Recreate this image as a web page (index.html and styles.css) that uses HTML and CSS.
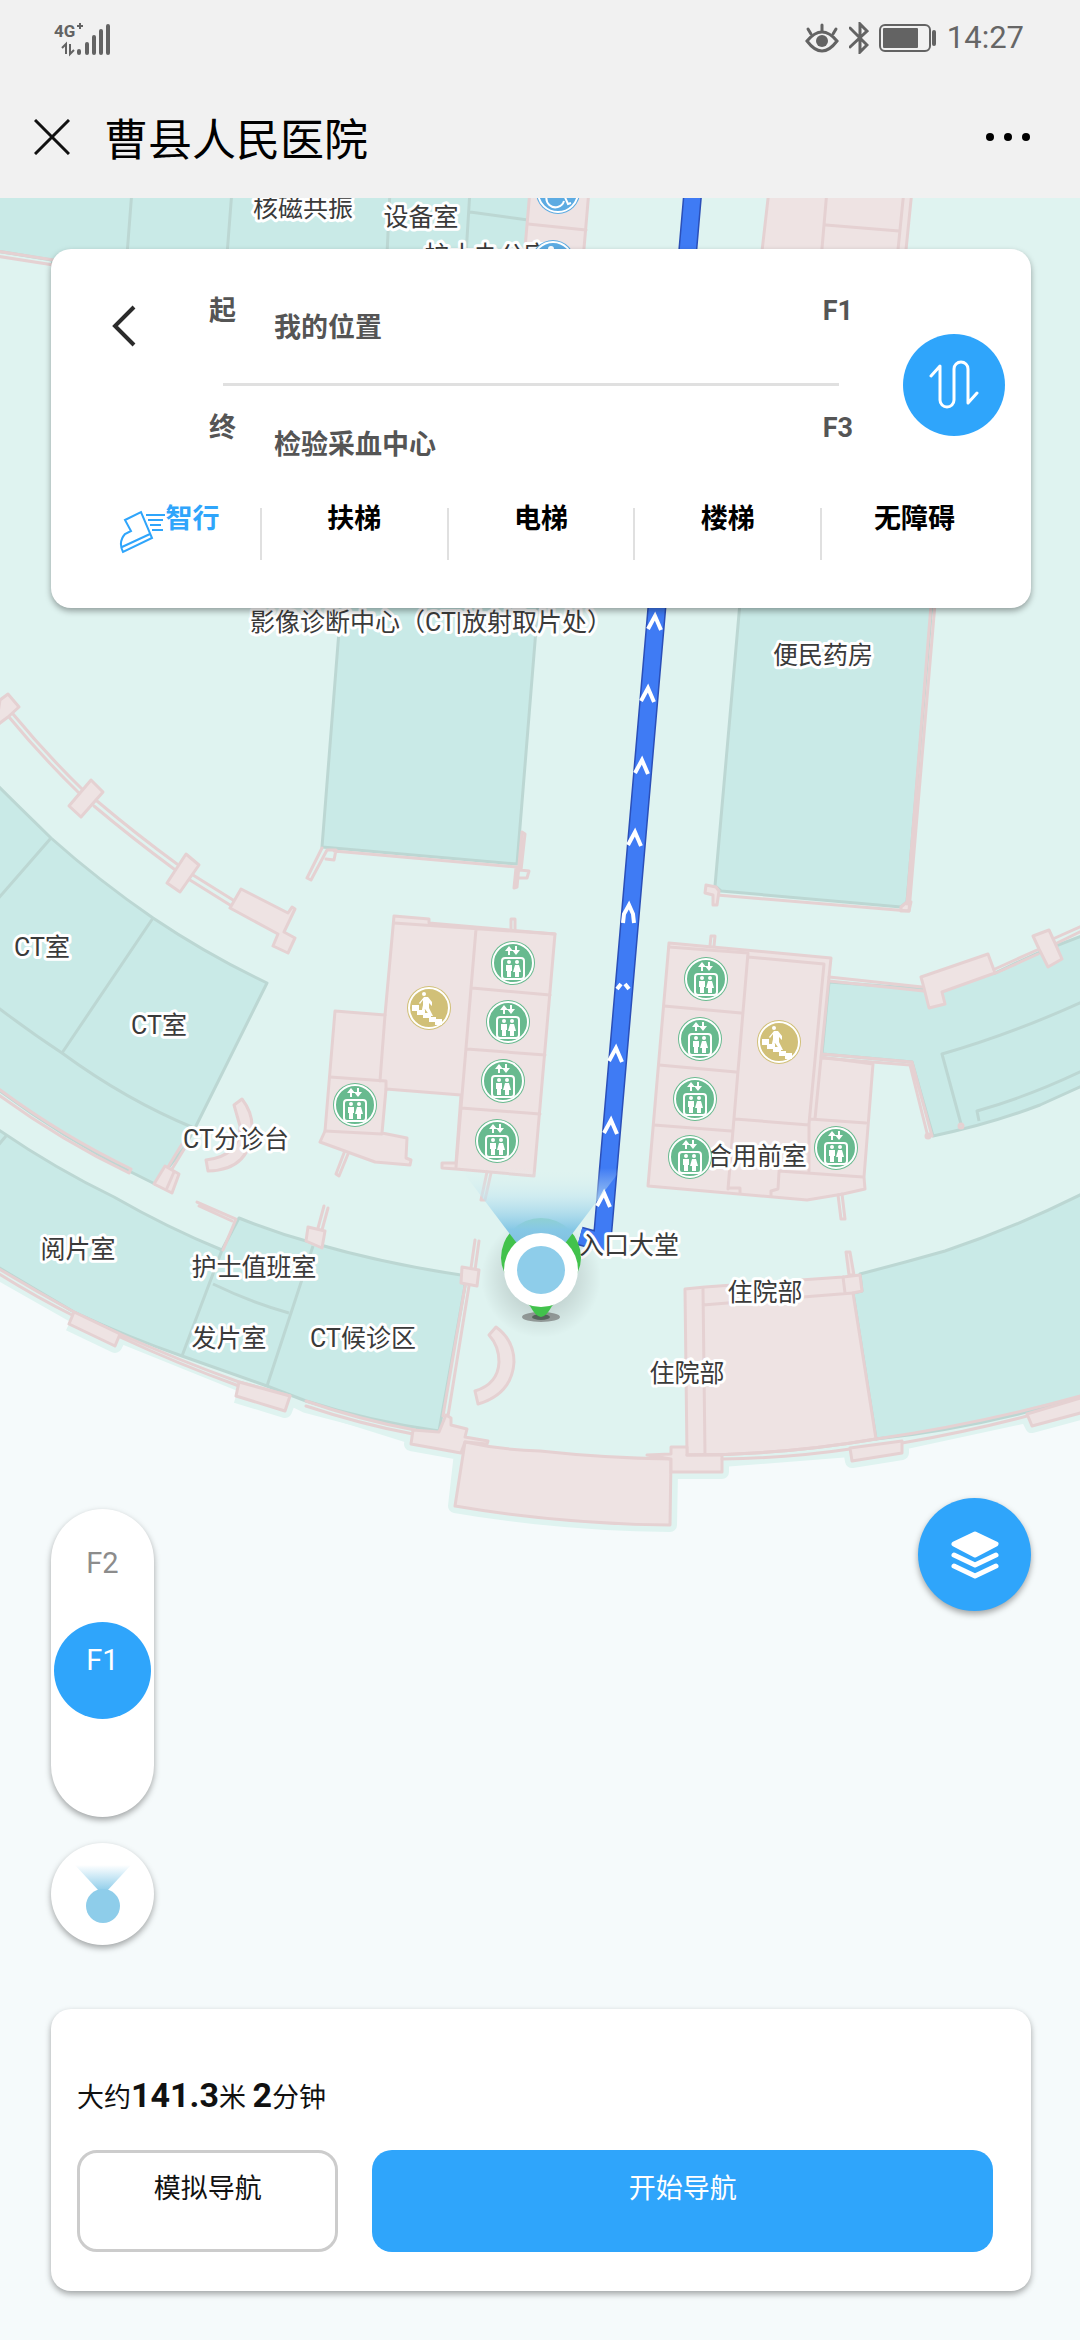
FILE: index.html
```html
<!DOCTYPE html>
<html lang="zh-CN">
<head>
  <meta charset="UTF-8" />
  <meta name="viewport" content="width=device-width, initial-scale=1.0"/>
  <title>曹县人民医院</title>
  <link rel="stylesheet" href="styles.css">
</head>
<body>
  <!-- STATUS BAR -->
  <div class="status">
    <svg class="signal" width="60" height="44" viewBox="54 14 60 44">
      <text x="54" y="35" class="net">4G</text>
      <path d="M77 24h6M80 21v6" class="thin"/>
      <path d="M62 46l4-4v10M70 42v10l4-4" class="thin"/>
      <path d="M79 49v2M87 42v9M94 35v16M101 29v22M108 24v27" class="bars"/>
    </svg>
    <div class="status-right">
      <svg width="34" height="30" viewBox="0 0 34 30">
        <path d="M2 18Q17 0 32 18Q17 38 2 18Z" class="eye-line"/>
        <circle cx="17" cy="18" r="6" class="solid"/>
        <path d="M17 2v6M3 6l3 5M31 6l-3 5" class="eye-line"/>
      </svg>
      <svg width="20" height="32" viewBox="0 0 20 32">
        <path d="M1 6l17 17-7 7V2l7 7L1 25" class="bt"/>
      </svg>
      <svg width="58" height="28" viewBox="0 0 58 28">
        <rect x="1" y="1" width="50" height="26" rx="5" class="bat"/>
        <rect x="4" y="4" width="35" height="20" rx="1" class="solid"/>
        <rect x="53" y="6" width="4" height="16" rx="2" class="solid"/>
      </svg>
      <span class="clock">14:27</span>
    </div>
  </div>

  <header class="titlebar">
    <button class="icon-btn" aria-label="关闭">
      <svg width="36" height="36" viewBox="0 0 36 36"><path d="M1 1l34 34M35 1L1 35" stroke="#111" stroke-width="3" fill="none"/></svg>
    </button>
    <h1>曹县人民医院</h1>
    <button class="icon-btn" aria-label="更多">
      <svg width="44" height="12" viewBox="0 0 44 12"><circle cx="4" cy="6" r="4"/><circle cx="22" cy="6" r="4"/><circle cx="40" cy="6" r="4"/></svg>
    </button>
  </header>

  <main class="stage">
    <!-- MAP -->
    <svg class="map" viewBox="0 198 1080 2142" preserveAspectRatio="xMidYMin slice">
      <defs>
        <linearGradient id="beam" x1="0" y1="0" x2="0" y2="1">
          <stop offset="0" stop-color="#dff3f0" stop-opacity="0"/>
          <stop offset=".35" stop-color="#c3e6f0" stop-opacity=".6"/>
          <stop offset=".75" stop-color="#86c8e5"/>
          <stop offset="1" stop-color="#7fbfdf"/>
        </linearGradient>
        <radialGradient id="halo">
          <stop offset=".5" stop-color="#000" stop-opacity=".12"/>
          <stop offset="1" stop-color="#000" stop-opacity="0"/>
        </radialGradient>
        <symbol id="lift" viewBox="0 0 44 44">
          <circle cx="22" cy="22" r="22" fill="#68ba8f"/>
          <circle cx="22" cy="22" r="20" fill="none" stroke="#fff" stroke-width="2"/>
          <path d="M14 10l4-5 4 5h-3v4h-2v-4zM24 5h2v4h3l-4 5-4-5h3z" fill="#fff"/>
          <rect x="11" y="17" width="22" height="21" rx="3" fill="none" stroke="#fff" stroke-width="2"/>
          <circle cx="18" cy="21" r="2" fill="#fff"/>
          <circle cx="26" cy="21" r="2" fill="#fff"/>
          <path d="M15 24h6v6h-1v6h-4v-6h-1zM24 24h4l2 7h-2v5h-4v-5h-2z" fill="#fff"/>
        </symbol>
        <symbol id="stairs" viewBox="0 0 44 44">
          <circle cx="22" cy="22" r="22" fill="#d1c078"/>
          <circle cx="22" cy="22" r="20" fill="none" stroke="#fff" stroke-width="2"/>
          <path d="M5 19h7v5h6v3h6v4h5v2h6v6h-7v-3h-6v-4h-6v-3h-6v-4h-5z" fill="#fff"/>
          <circle cx="17" cy="8" r="2" fill="#fff"/>
          <path d="M17 11h4l4 5v4l-3-3v5l4 8h-3l-5-7-2 5h-2l2-9v-5l-3 4-1-1z" fill="#fff"/>
        </symbol>
        <symbol id="wheel" viewBox="0 0 44 44">
          <circle cx="22" cy="22" r="22" fill="#5cabe2"/>
          <circle cx="22" cy="22" r="20" fill="none" stroke="#fff" stroke-width="2"/>
          <circle cx="20" cy="9" r="3" fill="#fff"/>
          <path d="M20 13v12h8l4 9 3-1M16 20a9 9 0 1 0 12 11" stroke="#fff" stroke-width="2" fill="none"/>
        </symbol>
      </defs>

      <!-- floor -->
      <path class="floor" d="M0 198H1080V1407L984 1430L900 1450L850 1452L722 1460V1474H671L670 1525L540 1520L455 1506L461 1453L411 1444L306 1411L182 1366L74 1318L0 1276Z"/>
      <path class="rim" d="M0 1274L74 1316M69 1324L115 1346L120 1336L239 1384M236 1396L285 1411L290 1398L306 1406L413 1434L411 1444L461 1453L455 1506Q560 1524 670 1525L671 1472H722V1460L850 1450L852 1461L902 1453V1443L1027 1416L1032 1426L1080 1413"/>

      <!-- rooms -->
      <g class="room">
        <path d="M-4 190H535L525 300H60L52 260L-4 251Z"/>
        <path d="M132 190L127 255M232 190L227 255M390 190L387 255M470 190L466 255M470 212L528 220"/>
        <path d="M343 580L322 847L517 864L540 580Z"/>
        <path d="M742 580L715 886L721 891L901 907L907 902L934 580Z"/>
        <path d="M-4 784Q20 808 51 838Q98 880 153 918Q208 955 267 983L196 1126L184 1148L155 1184L131 1172Q60 1136 -4 1088Z"/>
        <path d="M51 838L-4 901M153 918L62 1053M-4 1006Q30 1032 62 1053Q126 1100 194 1128"/>
        <path d="M-4 1128Q54 1168 114 1197Q168 1228 222 1250L239 1218Q276 1233 313 1243Q386 1264 461 1275L465 1286L439 1431Q372 1422 306 1401L267 1386L182 1356Q130 1338 74 1312L-4 1266Z"/>
        <path d="M222 1250L182 1356M213 1284Q250 1302 289 1313M313 1246L267 1386M6 1136L-4 1148"/>
        <path d="M829 982L924 989L995 973L1040 952L1084 935V1085L1040 1105Q990 1124 933 1136L912 1062L822 1054Z"/>
        <path d="M1084 1001Q1012 1034 942 1054L961 1124M1084 1070Q1030 1096 977 1111L979 1121"/>
        <path d="M860 1274Q903 1263 945 1251Q1014 1228 1084 1193V1396Q980 1428 876 1439L853 1293L862 1291Z"/>
      </g>

      <!-- walls and service areas -->
      <g class="wall">
        <path d="M530 190H589L583 260H524Z"/>
        <path d="M528 224L586 230"/>
        <path d="M769 190H912L905 260H761Z"/>
        <path d="M827 190L821 260M826 225L899 231M904 190L897 260"/>
        <path d="M-4 251L60 261M-4 256L60 266"/>
        <path d="M0 700L8 694L19 707L8 717L-4 726Z"/>
        <path d="M9 717Q42 757 80 794M13 714Q46 754 83 790M94 806Q132 838 174 869M97 801Q136 834 177 864M190 880L230 905M193 875L233 900"/>
        <path d="M91 780L103 792L81 817L69 806ZM186 854L199 865L180 892L167 883Z"/>
        <path d="M241 889L288 913L292 907L295 909L284 932L295 938L288 953L273 946L278 934L230 908Z"/>
        <path d="M322 848L307 878L311 880L327 850H336L334 860L326 859M334 851L517 867M522 832L517 887L514 888L516 868M520 870L529 871L527 878H519M522 832L525 834L521 870"/>
        <path d="M907 902L901 907V911H909L911 902Z"/>
        <path d="M937 580L909 911L717 895M933 580L907 904"/>
        <path d="M706 885L716 887L719 891L717 905H713V895L705 893Z"/>
        <path d="M-4 1087Q62 1136 131 1169L129 1173Q60 1140 -4 1093"/>
        <path d="M186 1146L172 1169M182 1144L168 1167"/>
        <path d="M165 1166L179 1174L172 1193L154 1184Z"/>
        <path d="M174 1172L167 1188"/>
        <path d="M234 1105L242 1099Q252 1112 252 1126Q252 1170 208 1171L206 1160Q240 1156 240 1126Z"/>
        <path d="M197 1202L236 1219L223 1250M199 1206L232 1221"/>
        <path d="M328 1208L322 1230M324 1206L318 1228"/>
        <path d="M308 1227L325 1231L322 1248L306 1241Z"/>
        <path d="M479 1241L475 1270M475 1240L471 1268M469 1286L448 1416M465 1286L443 1416"/>
        <path d="M462 1267L479 1270L477 1286L461 1283Z"/>
        <path d="M489 1335L496 1327Q514 1340 514 1362Q512 1394 478 1404L475 1391Q498 1384 499 1362Q499 1346 489 1335Z"/>
        <path d="M394 916L429 919V923L555 934L534 1176L456 1169L442 1168V1163H456L461 1095L386 1089L382 1133L407 1138L406 1158L411 1160L410 1165L375 1162L320 1142L325 1131L335 1011L385 1015Z"/>
        <path d="M394 923L555 934M385 1015L380 1081M386 1089V1081L330 1077M325 1131L382 1134M476 929L456 1167M472 988L550 995M467 1049L545 1055M461 1108L540 1114M511 930V919H515V931M344 1153L336 1174L339 1176L348 1154M487 1172L481 1200H485L491 1173"/>
        <path d="M669 943L831 958L829 977L821 1057L873 1064L864 1177L865 1189L843 1194L807 1200L648 1186Z"/>
        <path d="M669 947L748 953L728 1189M748 957L824 964L809 1124V1171M664 1006L741 1013M659 1065L736 1072M654 1125L731 1131M735 1119L809 1125M821 1058L815 1119M810 1119L866 1123M779 1171L863 1177M779 1172L778 1189L771 1191V1196M729 1188H740V1193M710 946L711 936H715L714 946M829 977L922 987M829 981L924 991M822 1058L910 1065L928 1137M822 1054L912 1062L932 1136M838 1195L841 1219H845L842 1194"/>
        <path d="M995 969L1037 950M996 973L1038 954M1055 938L1084 925M1057 943L1084 930"/>
        <path d="M921 977L988 954L995 973L942 992L945 1004L929 1008L924 988ZM1033 936L1049 930L1055 943L1062 959L1048 967L1039 949Z"/>
        <circle cx="928" cy="1136" r="2"/><circle cx="961" cy="1126" r="2"/>
        <path d="M685 1289L705 1287L843 1277L860 1275L862 1291L853 1293L876 1439Q783 1455 687 1455Z"/>
        <path d="M703 1289L705 1455M703 1305L853 1293M843 1277L845 1293M846 1252H850L854 1275H849Z"/>
        <path d="M-4 1267Q34 1290 74 1312L120 1334Q178 1360 239 1382L290 1396M-4 1272Q34 1296 74 1316M120 1337Q178 1364 239 1386M306 1401Q360 1420 415 1430M306 1406Q360 1424 413 1434"/>
        <path d="M74 1312L120 1334L115 1346L69 1324ZM239 1382L290 1396L285 1411L236 1396Z"/>
        <path d="M413 1430L439 1432L446 1415L451 1418V1425L467 1429L465 1437L488 1441L487 1444L465 1442L461 1453L411 1444Z"/>
        <path d="M465 1442Q502 1450 540 1451Q604 1458 671 1459L670 1525Q560 1524 455 1506Z"/>
        <path d="M647 1455L671 1454V1447H687V1455H722V1472H671V1459Z"/>
        <path d="M687 1455Q783 1455 876 1439Q980 1424 1084 1395M722 1459Q790 1458 850 1449M902 1443Q966 1432 1027 1416"/>
        <path d="M850 1448L902 1441V1453L852 1461ZM1027 1414L1084 1397V1412L1032 1426Z"/>
      </g>

      <!-- labels -->
      <g class="labels">
        <text x="303" y="217">核磁共振</text>
        <text x="421" y="226">设备室</text>
        <text x="487" y="264">护士办公室</text>
        <text x="431" y="631">影像诊断中心（CT|放射取片处）</text>
        <text x="823" y="664">便民药房</text>
        <text x="42" y="956">CT室</text>
        <text x="159" y="1034">CT室</text>
        <text x="236" y="1148">CT分诊台</text>
        <text x="78" y="1258">阅片室</text>
        <text x="254" y="1276">护士值班室</text>
        <text x="229" y="1347">发片室</text>
        <text x="363" y="1347">CT候诊区</text>
        <text x="757" y="1165">合用前室</text>
        <text x="765" y="1301">住院部</text>
        <text x="687" y="1382">住院部</text>
      </g>

      <!-- route -->
      <path class="route-edge" d="M693 190L602 1242L580 1236"/>
      <path class="route" d="M693 190L602 1242L580 1236"/>
      <path class="arrows" d="M648 629l7-13 6 14M641 701l7-13 6 14M635 773l7-13 6 14M628 845l7-13 6 14M623 923l1-9 5-9 4 9 1 9M617 989l4-5M625 984l4 5M609 1061l7-13 6 14M604 1133l7-13 6 14M597 1206l7-13 6 14"/>
      <g class="labels">
        <text x="629" y="1254">入口大堂</text>
      </g>

      <use href="#wheel" x="536" y="170" width="44" height="44"/>
      <use href="#wheel" x="531" y="240" width="44" height="44"/>
      <use href="#stairs" x="407" y="986" width="44" height="44"/>
      <use href="#stairs" x="757" y="1020" width="44" height="44"/>
      <use href="#lift" x="491" y="941" width="44" height="44"/>
      <use href="#lift" x="486" y="1000" width="44" height="44"/>
      <use href="#lift" x="481" y="1059" width="44" height="44"/>
      <use href="#lift" x="475" y="1119" width="44" height="44"/>
      <use href="#lift" x="333" y="1083" width="44" height="44"/>
      <use href="#lift" x="684" y="957" width="44" height="44"/>
      <use href="#lift" x="678" y="1017" width="44" height="44"/>
      <use href="#lift" x="673" y="1077" width="44" height="44"/>
      <use href="#lift" x="668" y="1135" width="44" height="44"/>
      <use href="#lift" x="814" y="1126" width="44" height="44"/>

      <!-- current position -->
      <ellipse cx="541" cy="1317" rx="19" ry="5" fill="#9ba3a1"/>
      <ellipse cx="541" cy="1317" rx="9" ry="3" fill="#5c6b63"/>
      <circle cx="541" cy="1278" r="60" fill="url(#halo)"/>
      <path d="M541 1317Q536 1317 530 1306Q501 1278 501 1258A40 40 0 0 1 581 1258Q581 1278 552 1306Q546 1317 541 1317Z" fill="#42c24c"/>
      <path d="M460 1168H622L560 1250H522Z" fill="url(#beam)"/>
      <circle cx="541" cy="1270" r="37" fill="#fff"/>
      <circle cx="541" cy="1270" r="24" fill="#8ecdea"/>
    </svg>

    <!-- ROUTE CARD -->
    <section class="card route-card">
      <div class="route-box">
        <button class="back" aria-label="返回">
          <svg width="26" height="42" viewBox="0 0 26 42"><path d="M23 2L4 21l19 19" stroke="#2b2b2b" stroke-width="4" fill="none"/></svg>
        </button>
        <div class="places">
          <div class="place">
            <label for="from">起</label>
            <input id="from" type="text" value="我的位置">
            <span>F1</span>
          </div>
          <hr>
          <div class="place">
            <label for="to">终</label>
            <input id="to" type="text" value="检验采血中心">
            <span>F3</span>
          </div>
        </div>
        <button class="swap" aria-label="交换起终点">
          <svg width="50" height="52" viewBox="0 0 50 52"><path d="M2 17l9-10v34a7 7 0 0 0 14 0V10a7 7 0 0 1 14 0v34l9-10" stroke="#fff" stroke-width="3" fill="none" stroke-linecap="round" stroke-linejoin="round"/></svg>
        </button>
      </div>
      <nav class="modes">
        <button class="mode active">
          <svg width="46" height="44" viewBox="0 0 46 44"><path d="M6 10L22 2l11 26L4 42Q-1 32 6 24L12 21ZM3 37l28-13M27 5h19M29 10h15M31 15h11M33 20h11" stroke="#2fa5fb" stroke-width="2" fill="none"/></svg>智行</button>
        <button class="mode">扶梯</button>
        <button class="mode">电梯</button>
        <button class="mode">楼梯</button>
        <button class="mode">无障碍</button>
      </nav>
    </section>

    <div class="tools">
      <div class="tools-left">
        <div class="floors">
          <button class="floor-btn">F2</button>
          <button class="floor-btn current">F1</button>
        </div>
        <button class="locate" aria-label="定位">
          <svg width="56" height="60" viewBox="0 0 56 60">
            <defs>
              <linearGradient id="ray" x1="0" y1="0" x2="0" y2="1">
                <stop offset="0" stop-color="#8ecdea" stop-opacity="0"/>
                <stop offset="1" stop-color="#8ecdea"/>
              </linearGradient>
            </defs>
            <path d="M0 1H56L32 27H24Z" fill="url(#ray)"/>
            <circle cx="28" cy="42" r="17" fill="#8ecdea"/>
          </svg>
        </button>
      </div>
      <button class="layers" aria-label="图层">
        <svg width="50" height="50" viewBox="0 0 50 50" fill="none" stroke="#fff" stroke-width="5" stroke-linecap="round" stroke-linejoin="round">
          <path d="M25 4L46 14 25 25 4 14Z" fill="#fff"/>
          <path d="M4 25l21 10 21-10M4 36l21 10 21-10"/>
        </svg>
      </button>
    </div>

    <!-- START CARD -->
    <section class="card start-card">
      <p class="summary">大约<b>141.3</b>米 <b>2</b>分钟</p>
      <div class="actions">
        <button class="btn simulate">模拟导航</button>
        <button class="btn start">开始导航</button>
      </div>
    </section>
  </main>
</body>
</html>
```
FILE: styles.css
```css
:root {
  --blue: #2fa5fb;
  --bar: #f1f1f1;
  --outside: #f5fafb;
  --floor: #dff3f0;
  --room: #c9eae7;
  --pink: #eee3e3;
  --shadow: 0 3px 6px rgba(0, 0, 0, 0.35);
}

* {
  margin: 0;
  padding: 0;
  box-sizing: border-box;
}

body {
  font-family: Roboto, "Noto Sans CJK SC", sans-serif;
  background: var(--outside);
  display: flex;
  flex-direction: column;
  min-height: 100vh;
}

button, input {
  font: inherit;
  border: none;
  background: none;
  outline: none;
}

button {
  cursor: pointer;
}

svg {
  display: block;
}

/* status bar */
.status {
  display: flex;
  justify-content: space-between;
  align-items: center;
  height: 75px;
  padding: 0 56px 0 54px;
  background: var(--bar);
}

.status-right {
  display: flex;
  align-items: center;
  gap: 10px;
}

.clock {
  font-size: 31px;
  color: #666;
}

.net {
  font-size: 17px;
  font-weight: bold;
  fill: #636363;
}

.solid {
  fill: #636363;
}

.thin, .bars, .eye-line, .bt, .bat {
  fill: none;
  stroke: #636363;
}

.thin, .bat {
  stroke-width: 2;
}

.bars {
  stroke-width: 4;
  stroke-linecap: round;
}

.eye-line, .bt {
  stroke-width: 3;
  stroke-linecap: round;
}

/* title bar */
.titlebar {
  display: flex;
  align-items: center;
  height: 123px;
  padding: 0 50px 0 34px;
  background: var(--bar);
}

.titlebar h1 {
  flex: 1;
  margin-left: 34px;
  font-size: 44px;
  font-weight: 400;
  color: #000;
}

/* map */
.stage {
  position: relative;
  flex: 1;
  display: flex;
  flex-direction: column;
  padding: 51px 49px 49px 51px;
}

.map {
  position: absolute;
  inset: 0;
  width: 100%;
  height: 100%;
}

.floor {
  fill: var(--floor);
}

.rim {
  fill: none;
  stroke: var(--floor);
  stroke-width: 14;
  stroke-linejoin: round;
}

.room path {
  fill: var(--room);
  stroke: #bcd7d3;
  stroke-width: 3;
  stroke-linejoin: round;
}

.room path:nth-child(2),
.room path:nth-child(6),
.room path:nth-child(8),
.room path:nth-child(10) {
  fill: none;
}

.wall path, .wall circle {
  fill: none;
  stroke: #e5d1d2;
  stroke-width: 3;
  stroke-linejoin: round;
  stroke-linecap: round;
}

.wall path[d$="Z"] {
  fill: var(--pink);
}

.route-edge {
  fill: none;
  stroke: #2b4fb8;
  stroke-width: 19;
}

.route {
  fill: none;
  stroke: #3f7bf4;
  stroke-width: 16;
}

.arrows {
  fill: none;
  stroke: #fff;
  stroke-width: 4;
}

.labels text {
  font-size: 25px;
  text-anchor: middle;
  fill: #3a3a3a;
  stroke: #fff;
  stroke-width: 6;
  stroke-linejoin: round;
  paint-order: stroke;
}

/* cards */
.card {
  position: relative;
  background: #fff;
  border-radius: 20px;
  box-shadow: var(--shadow);
}

.route-card {
  padding: 44px 0 48px;
}

.route-box {
  display: flex;
  align-items: center;
  padding: 0 26px 0 40px;
}

.back {
  align-self: flex-start;
  display: grid;
  place-items: center;
  width: 66px;
  height: 66px;
}

.places {
  flex: 1;
  margin: 0 50px 0 52px;
}

.place {
  display: flex;
  font-size: 27px;
  font-weight: bold;
  line-height: 36px;
  color: #555;
}

.place input {
  flex: 1;
  min-width: 0;
  height: 36px;
  margin: 17px 0 0 38px;
  color: #555;
}

.places hr {
  height: 3px;
  margin: 37px 14px 24px;
  border: none;
  background: #e0e0e0;
}

.swap {
  display: grid;
  place-items: center;
  width: 102px;
  height: 102px;
  margin-top: 14px;
  border-radius: 50%;
  background: var(--blue);
}

.modes {
  display: grid;
  grid-template-columns: repeat(5, 1fr);
  margin: 45px 24px 0 22px;
}

.mode {
  display: flex;
  justify-content: center;
  height: 52px;
  font-size: 27px;
  font-weight: bold;
  line-height: 22px;
  color: #000;
}

.mode + .mode {
  border-left: 2px solid #e0e0e0;
}

.mode.active {
  padding-left: 6px;
  color: var(--blue);
}

.mode svg {
  margin-top: 2px;
}

/* floating tools */
.tools {
  position: relative;
  display: flex;
  justify-content: space-between;
  align-items: flex-start;
  margin: auto 0 64px;
}

.tools-left {
  display: flex;
  flex-direction: column;
  gap: 26px;
  margin-top: 11px;
}

.floors {
  display: flex;
  flex-direction: column;
  align-items: center;
  width: 103px;
  height: 308px;
  padding-top: 16px;
  border-radius: 52px;
  background: #fff;
  box-shadow: var(--shadow);
}

.floor-btn {
  width: 97px;
  height: 97px;
  padding-bottom: 22px;
  border-radius: 50%;
  font-size: 29px;
  color: #8c8c8c;
}

.floor-btn.current {
  background: var(--blue);
  color: #fff;
}

.locate, .layers {
  display: grid;
  place-items: center;
  width: 103px;
  height: 102px;
  border-radius: 50%;
  background: #fff;
  box-shadow: var(--shadow);
}

.layers {
  width: 113px;
  height: 113px;
  background: var(--blue);
}

/* start card */
.start-card {
  padding: 62px 38px 39px 26px;
}

.summary {
  font-size: 27px;
  line-height: 48px;
  color: #111;
}

.summary b {
  font-size: 34px;
}

.actions {
  display: grid;
  grid-template-columns: 8fr 19fr;
  gap: 34px;
  margin-top: 28px;
}

.btn {
  height: 102px;
  padding-bottom: 30px;
  border-radius: 20px;
  font-size: 27px;
}

.simulate {
  border: 3px solid #ccc;
  color: #111;
}

.start {
  background: var(--blue);
  color: #fff;
}
```
